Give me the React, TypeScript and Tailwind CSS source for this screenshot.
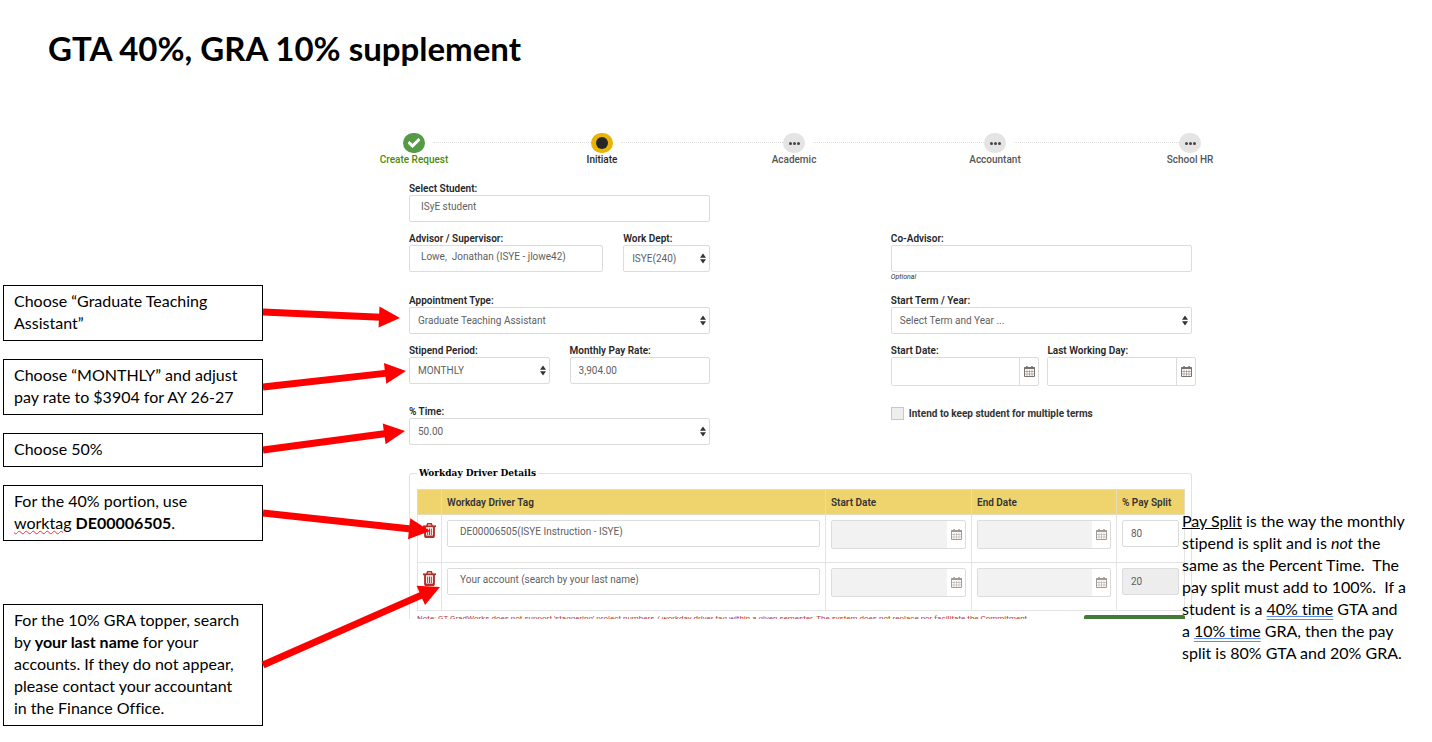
import React, { useState } from 'react';
import clsx from 'clsx';
import { FaCheck } from 'react-icons/fa';

type Status = 'done' | 'current' | 'pending';

const steps: { label: string; status: Status }[] = [
  { label: 'Create Request', status: 'done' },
  { label: 'Initiate', status: 'current' },
  { label: 'Academic', status: 'pending' },
  { label: 'Accountant', status: 'pending' },
  { label: 'School HR', status: 'pending' },
];

const arrows = [
  { from: [263, 312], to: [400, 318] },
  { from: [263, 387], to: [406, 371] },
  { from: [263, 450], to: [405, 431] },
  { from: [263, 513], to: [430, 531] },
  { from: [263, 665], to: [440, 587] },
];

const fieldClass =
  'block w-full rounded-[2px] border border-[#dcdcdc] bg-white text-[10px] leading-3 text-[#5f5f5f] outline-none';

const Arrow = ({ from, to }: { from: number[]; to: number[] }) => {
  const dx = to[0] - from[0];
  const dy = to[1] - from[1];
  const length = Math.hypot(dx, dy);
  const angle = (Math.atan2(dy, dx) * 180) / Math.PI;
  return (
    <g transform={`translate(${from[0]} ${from[1]}) rotate(${angle})`} fill="#ff0000">
      <rect x={0} y={-3.5} width={length - 19} height={7} />
      <polygon points={`${length},0 ${length - 21},-10.5 ${length - 21},10.5`} />
    </g>
  );
};

const CalendarIcon = () => (
  <svg width="11" height="11" viewBox="0 0 11 11" fill="none" stroke="#7b706b" aria-hidden="true">
    <path d="M.5 1.500h10v9H.5z" />
    <path d="M0 2.200h11" strokeWidth="1.800" />
    <path d="M3 0v3M8 0v3" strokeWidth="1.500" />
    <path d="M3 4v6.500M5.500 4v6.500M8 4v6.500M.5 5.500h10M.5 8h10" strokeWidth=".5" />
  </svg>
);

const TrashIcon = () => (
  <svg width="13" height="15" viewBox="0 0 13 15" fill="none" stroke="#b52e2a" aria-hidden="true">
    <path d="M0 3.300h13" strokeWidth="1.800" />
    <path d="M3.800 3.300l.8-2.500h3.800l.8 2.500" strokeWidth="1.400" />
    <path d="M2.100 3.300v9.800q0 1 1 1h6.800q1 0 1-1V3.300" strokeWidth="2" />
    <path d="M4.700 5.500v6.500M6.500 5.500v6.500M8.300 5.500v6.500" />
    <path d="M2.500 13.500h8" strokeWidth="2" />
  </svg>
);

const Field = ({
  id,
  label,
  className,
  children,
}: {
  id: string;
  label: string;
  className?: string;
  children: React.ReactNode;
}) => (
  <div className={className}>
    <label htmlFor={id} className="block whitespace-nowrap text-[10px] font-semibold leading-[13px] text-[#262626]">
      {label}
    </label>
    {children}
  </div>
);

const SelectBox = ({ id, options }: { id: string; options: string[] }) => (
  <div className="relative">
    <select id={id} className={clsx(fieldClass, 'h-[27px] appearance-none pl-2 pr-4')}>
      {options.map((option) => (
        <option key={option}>{option}</option>
      ))}
    </select>
    <svg className="pointer-events-none absolute right-1 top-2" width="6" height="11" viewBox="0 0 6 11" fill="#333">
      <path d="M3 0.500l3 4.200H0zM3 10.500l3-4.200H0z" />
    </svg>
  </div>
);

const DateBox = ({ id, label, disabled }: { id: string; label?: string; disabled?: boolean }) => (
  <div className="flex h-[29px] rounded-[2px] border border-[#dcdcdc]">
    <input
      id={id}
      aria-label={label}
      disabled={disabled}
      className={clsx(
        'w-full min-w-0 flex-1 px-2 text-[10px] outline-none',
        disabled ? 'bg-[#f2f2f2]' : 'border-r border-[#dcdcdc] bg-white'
      )}
    />
    <button
      type="button"
      aria-label="Open calendar"
      className={clsx('flex w-[18px] items-center justify-center', disabled && 'opacity-70')}
    >
      <CalendarIcon />
    </button>
  </div>
);

const StepCircle = ({ status }: { status: Status }) => {
  if (status === 'done') {
    return (
      <div className="flex h-5 w-[22px] items-center justify-center rounded-full bg-[#559a45]">
        <FaCheck className="text-xs text-white" stroke="white" strokeWidth={40} />
      </div>
    );
  }
  if (status === 'current') {
    return (
      <div className="flex h-5 w-[22px] items-center justify-center rounded-full bg-[#eab308]">
        <div className="h-3 w-3 rounded-full bg-[#262626]" />
      </div>
    );
  }
  return (
    <div className="flex h-5 w-[22px] items-center justify-center gap-px rounded-full bg-[#e4e4e4]">
      <span className="h-[3px] w-[3px] rounded-full bg-[#444]" />
      <span className="h-[3px] w-[3px] rounded-full bg-[#444]" />
      <span className="h-[3px] w-[3px] rounded-full bg-[#444]" />
    </div>
  );
};

const Stepper = () => (
  <ol className="-ml-[6px] -mr-[9px] grid grid-cols-[188fr_192fr_201fr_195fr_22px]">
    {steps.map(({ label, status }, index) => (
      <li key={label} className="flex">
        <div className="flex w-[22px] shrink-0 flex-col items-center">
          <StepCircle status={status} />
          <span
            className={clsx(
              'whitespace-nowrap text-[10px] font-medium leading-[14px]',
              status === 'done' && 'text-[#4b8b0b]',
              status === 'current' && 'text-[#262626]',
              status === 'pending' && 'text-[#555]'
            )}
          >
            {label}
          </span>
        </div>
        {index < steps.length - 1 && (
          <div className="ml-2 mt-[9px] h-px flex-1 border-t border-dotted border-[#dedede]" />
        )}
      </li>
    ))}
  </ol>
);

const Callout = ({ className, children }: { className?: string; children: React.ReactNode }) => (
  <p className={clsx('border border-black bg-white pb-[6px] pl-[10px] pt-1 text-base leading-[22px]', className)}>
    {children}
  </p>
);

const App = () => {
  const [student, setStudent] = useState('ISyE student');
  const [advisor, setAdvisor] = useState('Lowe,  Jonathan (ISYE - jlowe42)');
  const [coAdvisor, setCoAdvisor] = useState('');
  const [payRate, setPayRate] = useState('3,904.00');
  const [multipleTerms, setMultipleTerms] = useState(false);
  const [drivers, setDrivers] = useState([
    { tag: 'DE00006505(ISYE Instruction - ISYE)', split: '80', locked: false },
    { tag: 'Your account (search by your last name)', split: '20', locked: true },
  ]);

  const updateDriver = (index: number, values: { tag?: string; split?: string }) =>
    setDrivers(drivers.map((driver, i) => (i === index ? { ...driver, ...values } : driver)));

  return (
    <div className="relative min-h-screen bg-white font-['Lato',sans-serif] text-black [font-variant-ligatures:none]">
      <header className="h-[133px] px-12 pt-7">
        <h1 className="text-[33px] font-bold leading-10">GTA 40%, GRA 10% supplement</h1>
      </header>

      <div className="flex items-start">
        <aside className="ml-[3px] flex w-[260px] shrink-0 flex-col gap-[18px] pt-[152px]">
          <Callout>
            Choose “Graduate Teaching
            <br />
            Assistant”
          </Callout>
          <Callout>
            Choose “MONTHLY” and adjust
            <br />
            pay rate to $3904 for AY 26-27
          </Callout>
          <Callout>Choose 50%</Callout>
          <Callout>
            For the 40% portion, use
            <br />
            <span className="underline decoration-red-500 decoration-wavy decoration-1">worktag</span>{' '}
            <strong>DE00006505</strong>.
          </Callout>
          <Callout className="mt-[45px]">
            For the 10% GRA topper, search
            <br />
            by <strong>your last name</strong> for your
            <br />
            accounts. If they do not appear,
            <br />
            please contact your accountant
            <br />
            in the Finance Office.
          </Callout>
        </aside>

        <main className="ml-[146px] min-w-0 flex-1 font-['Roboto',sans-serif]">
          <Stepper />

          <form>
            <div className="mt-[15px] grid grid-cols-[5fr_3fr_5fr]">
              <Field id="student" label="Select Student:">
                <input
                  id="student"
                  className={clsx(fieldClass, 'h-[27px] pb-1 pl-[11px]')}
                  value={student}
                  onChange={(e) => setStudent(e.target.value)}
                />
              </Field>
            </div>

            <div className="mt-[10px] grid grid-cols-[5fr_3fr_5fr]">
              <div className="flex gap-5">
                <Field id="advisor" label="Advisor / Supervisor:" className="flex-1">
                  <input
                    id="advisor"
                    className={clsx(fieldClass, 'h-[27px] pb-1 pl-[11px]')}
                    value={advisor}
                    onChange={(e) => setAdvisor(e.target.value)}
                  />
                </Field>
                <Field id="dept" label="Work Dept:" className="w-[87px]">
                  <SelectBox id="dept" options={['ISYE(240)']} />
                </Field>
              </div>
              <Field id="co-advisor" label="Co-Advisor:" className="col-start-3">
                <input
                  id="co-advisor"
                  className={clsx(fieldClass, 'h-[27px] px-3')}
                  value={coAdvisor}
                  onChange={(e) => setCoAdvisor(e.target.value)}
                />
                <p className="text-[7px] italic leading-[10px] text-[#333]">Optional</p>
              </Field>
            </div>

            <div className="mt-3 grid grid-cols-[5fr_3fr_5fr]">
              <Field id="appointment" label="Appointment Type:">
                <SelectBox id="appointment" options={['Graduate Teaching Assistant']} />
              </Field>
              <Field id="term" label="Start Term / Year:" className="col-start-3">
                <SelectBox id="term" options={['Select Term and Year ...']} />
              </Field>
            </div>

            <div className="mt-[10px] grid grid-cols-[5fr_3fr_5fr]">
              <div className="grid grid-cols-2 gap-5">
                <Field id="period" label="Stipend Period:">
                  <SelectBox id="period" options={['MONTHLY']} />
                </Field>
                <Field id="rate" label="Monthly Pay Rate:">
                  <input
                    id="rate"
                    className={clsx(fieldClass, 'h-[27px] px-2')}
                    value={payRate}
                    onChange={(e) => setPayRate(e.target.value)}
                  />
                </Field>
              </div>
              <div className="col-start-3 -mr-1 grid grid-cols-2 gap-2">
                <Field id="start-date" label="Start Date:">
                  <DateBox id="start-date" />
                </Field>
                <Field id="last-day" label="Last Working Day:">
                  <DateBox id="last-day" />
                </Field>
              </div>
            </div>

            <div className="mt-[19px] grid grid-cols-[5fr_3fr_5fr]">
              <Field id="time" label="% Time:">
                <SelectBox id="time" options={['50.00']} />
              </Field>
              <label className="col-start-3 flex h-4 items-center gap-[5px] text-[10px] font-bold text-[#333]">
                <input
                  type="checkbox"
                  className="h-[13px] w-[13px] appearance-none border border-[#c8c8c8] bg-[#eee] checked:bg-[#559a45]"
                  checked={multipleTerms}
                  onChange={(e) => setMultipleTerms(e.target.checked)}
                />
                Intend to keep student for multiple terms
              </label>
            </div>

            <fieldset className="mt-5 min-w-0 rounded-t-[3px] border border-b-0 border-[#e2e2e2] pl-[7px] pr-[6px]">
              <legend className="px-[2px] font-['DejaVu_Serif_Condensed','DejaVu_Serif',serif] text-[10px] font-bold leading-4 text-black">
                Workday Driver Details
              </legend>
              <table className="mt-2 w-full table-fixed border-collapse text-[10px]">
                <colgroup>
                  <col className="w-[24px]" />
                  <col />
                  <col className="w-[146px]" />
                  <col className="w-[145px]" />
                  <col className="w-[68px]" />
                </colgroup>
                <thead>
                  <tr className="h-[25px] bg-[#efd46e] text-left text-[#333]">
                    <th className="border border-[#e4dcbd]" aria-label="Remove" />
                    <th className="border border-[#e4dcbd] px-[5px] font-semibold">Workday Driver Tag</th>
                    <th className="border border-[#e4dcbd] px-[5px] font-semibold">Start Date</th>
                    <th className="border border-[#e4dcbd] px-[5px] font-semibold">End Date</th>
                    <th className="whitespace-nowrap border border-[#e4dcbd] px-[5px] font-semibold">% Pay Split</th>
                  </tr>
                </thead>
                <tbody>
                  {drivers.map((driver, index) => (
                    <tr key={index} className="h-[48px] align-top">
                      <td className="border border-[#e4e4e4] pt-2">
                        <button
                          type="button"
                          aria-label="Remove driver"
                          className="mx-auto block"
                          onClick={() => setDrivers(drivers.filter((_, i) => i !== index))}
                        >
                          <TrashIcon />
                        </button>
                      </td>
                      <td className="border border-[#e4e4e4] px-[5px] pt-[5px]">
                        <input
                          aria-label="Workday Driver Tag"
                          className={clsx(fieldClass, 'h-[27px] pb-1 pl-3')}
                          value={driver.tag}
                          onChange={(e) => updateDriver(index, { tag: e.target.value })}
                        />
                      </td>
                      <td className="border border-[#e4e4e4] px-[5px] pt-[5px]">
                        <DateBox id={`driver-start-${index}`} label="Start Date" disabled />
                      </td>
                      <td className="border border-[#e4e4e4] px-[5px] pt-[5px]">
                        <DateBox id={`driver-end-${index}`} label="End Date" disabled />
                      </td>
                      <td className="border border-[#e4e4e4] px-[5px] pt-[5px]">
                        <input
                          aria-label="% Pay Split"
                          readOnly={driver.locked}
                          className={clsx(fieldClass, 'h-[27px] px-2 read-only:bg-[#ededed]')}
                          value={driver.split}
                          onChange={(e) => updateDriver(index, { split: e.target.value })}
                        />
                      </td>
                    </tr>
                  ))}
                </tbody>
              </table>
              <div className="flex h-2 items-start justify-between overflow-hidden">
                <p className="whitespace-nowrap text-[8px] leading-4 text-[#b8403a]">
                  Note: GT GradWorks does not support 'staggering' project numbers / workday driver tag within a given
                  semester. The system does not replace nor facilitate the Commitment
                </p>
                <button
                  type="button"
                  aria-label="Add driver"
                  className="mt-1 h-6 w-[101px] shrink-0 rounded-[2px] bg-[#437a35]"
                />
              </div>
            </fieldset>
          </form>
        </main>

        <aside className="z-10 -ml-[10px] w-[250px] shrink-0 pt-[377px] text-base leading-[22px]">
          <p className="whitespace-pre">
            <u>Pay Split</u> is the way the monthly
            <br />
            stipend is split and is <em>not</em> the
            <br />
            same as the Percent Time.{'  '}The
            <br />
            pay split must add to 100%.{'  '}If a
            <br />
            student is a <span className="underline decoration-[#5b8def] decoration-double">40% time</span> GTA and
            <br />a <span className="underline decoration-[#5b8def] decoration-double">10% time</span> GRA, then the pay
            <br />
            split is 80% GTA and 20% GRA.
          </p>
        </aside>
      </div>

      <svg className="pointer-events-none absolute left-0 top-0" width="460" height="742" aria-hidden="true">
        {arrows.map(({ from, to }) => (
          <Arrow key={from[1]} from={from} to={to} />
        ))}
      </svg>
    </div>
  );
};

export default App;
